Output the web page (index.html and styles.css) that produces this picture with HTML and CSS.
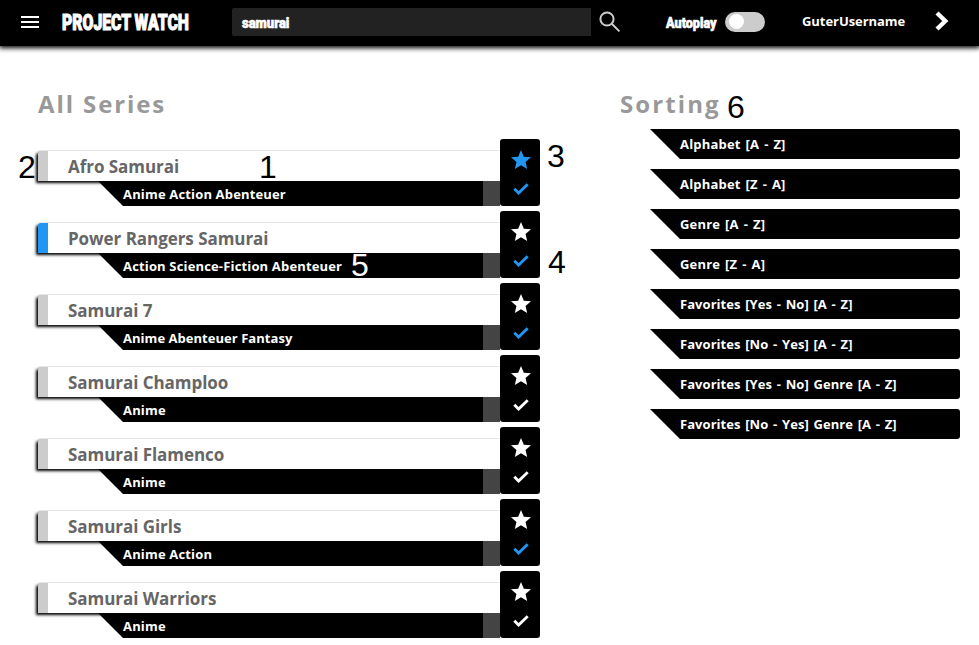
FILE: index.html
```html
<!DOCTYPE html>
<html lang="en">
<head>
<meta charset="utf-8">
<title>Project Watch</title>
<link rel="stylesheet" href="styles.css">
</head>
<body>
<svg class="sprite" aria-hidden="true">
  <symbol id="star" viewBox="0 0 24 24"><path d="M12 17.27 18.18 21l-1.64-7.03L22 9.24l-7.19-.61L12 2 9.19 8.63 2 9.24l5.46 4.73L5.82 21z"/></symbol>
  <symbol id="check" viewBox="0 0 16 12"><path d="M1.3 5.8 5.6 10 14.7 1.3" fill="none" stroke="currentColor" stroke-width="2.9"/></symbol>
</svg>
<header class="topbar">
  <div class="menu"><i></i><i></i><i></i></div>
  <div class="brand"><span>PROJECT WATCH</span></div>
  <div class="search"><span>samurai</span></div>
  <svg class="lens" viewBox="0 0 22 22"><circle cx="8" cy="8" r="6.6"/><path d="m12.8 12.8 7.6 7.6"/></svg>
  <div class="autoplay"><span>Autoplay</span></div>
  <div class="switch"></div>
  <div class="user">GuterUsername</div>
  <svg class="next" viewBox="0 0 14 20"><path d="m2 2 8.3 8L2 18"/></svg>
</header>
<main>
  <section class="series">
    <h1>All Series</h1>
    <article class="item">
      <div class="info"><h2>Afro Samurai</h2><p><span>Anime Action Abenteuer</span></p></div>
      <div class="actions"><svg class="star on"><use href="#star"/></svg><svg class="check on"><use href="#check"/></svg></div>
    </article>
    <article class="item">
      <div class="info active"><h2>Power Rangers Samurai</h2><p><span>Action Science-Fiction Abenteuer</span></p></div>
      <div class="actions"><svg class="star"><use href="#star"/></svg><svg class="check on"><use href="#check"/></svg></div>
    </article>
    <article class="item">
      <div class="info"><h2>Samurai 7</h2><p class="tight"><span>Anime Abenteuer Fantasy</span></p></div>
      <div class="actions"><svg class="star"><use href="#star"/></svg><svg class="check on"><use href="#check"/></svg></div>
    </article>
    <article class="item">
      <div class="info"><h2>Samurai Champloo</h2><p><span>Anime</span></p></div>
      <div class="actions"><svg class="star"><use href="#star"/></svg><svg class="check"><use href="#check"/></svg></div>
    </article>
    <article class="item">
      <div class="info"><h2>Samurai Flamenco</h2><p><span>Anime</span></p></div>
      <div class="actions"><svg class="star"><use href="#star"/></svg><svg class="check"><use href="#check"/></svg></div>
    </article>
    <article class="item">
      <div class="info"><h2>Samurai Girls</h2><p><span>Anime Action</span></p></div>
      <div class="actions"><svg class="star"><use href="#star"/></svg><svg class="check on"><use href="#check"/></svg></div>
    </article>
    <article class="item">
      <div class="info"><h2>Samurai Warriors</h2><p><span>Anime</span></p></div>
      <div class="actions"><svg class="star"><use href="#star"/></svg><svg class="check"><use href="#check"/></svg></div>
    </article>
  </section>
  <section class="sorting">
    <h1>Sorting</h1>
    <ul>
      <li class="short">Alphabet [A - Z]</li>
      <li class="short">Alphabet [Z - A]</li>
      <li class="short">Genre [A - Z]</li>
      <li class="short">Genre [Z - A]</li>
      <li>Favorites [Yes - No] [A - Z]</li>
      <li>Favorites [No - Yes] [A - Z]</li>
      <li>Favorites [Yes - No] Genre [A - Z]</li>
      <li>Favorites [No - Yes] Genre [A - Z]</li>
    </ul>
  </section>
</main>
<b class="note n1">1</b>
<b class="note n2">2</b>
<b class="note n3">3</b>
<b class="note n4">4</b>
<b class="note n5">5</b>
<b class="note n6">6</b>
</body>
</html>
```
FILE: styles.css
```css
* { box-sizing: border-box; margin: 0; padding: 0; }
body {
  width: 979px;
  height: 645px;
  overflow: hidden;
  background: #fff;
  font-family: "Open Sans", "Noto Sans", sans-serif;
  font-weight: 700;
}
.sprite { display: none; }

.topbar {
  display: flex;
  align-items: center;
  height: 46px;
  padding-left: 21px;
  padding-bottom: 2px;
  background: #000;
  color: #fff;
  box-shadow: 0 1px 5px 1px #000;
}
.menu { width: 18px; margin-right: 23px; }
.menu i { display: block; height: 2px; background: #fff; }
.menu i + i { margin-top: 3px; }
.brand, .search span, .autoplay {
  font-family: Roboto, sans-serif;
  font-weight: 900;
  white-space: nowrap;
}
.brand { width: 170px; font-size: 22.5px; line-height: 28px; }
.brand span, .search span, .autoplay span {
  display: inline-block;
  transform-origin: 0 50%;
  -webkit-text-stroke: .6px #fff;
}
.brand span { transform: scaleX(.7); -webkit-text-stroke-width: 1.1px; }
.search {
  width: 359px;
  height: 28px;
  padding-left: 10px;
  border-radius: 2px 0 0 2px;
  background: #222;
  font-size: 14px;
  line-height: 29px;
}
.search span { transform: scaleX(.93); }
.lens { width: 22px; height: 22px; margin-left: 8px; fill: none; stroke: #ccc; stroke-width: 2; }
.autoplay { width: 59px; margin-left: 45px; padding-top: 2px; font-size: 14px; }
.autoplay span { transform: scaleX(.9); }
.switch { width: 40px; height: 20px; padding: 2px 4px; border-radius: 10px; background: #ccc; }
.switch::before { content: ""; display: block; width: 15px; height: 15px; border-radius: 50%; background: #fff; }
.user { width: 133px; margin: -2px 0 0 37px; font-size: 13px; line-height: 20px; letter-spacing: -.06px; }
.next { width: 14px; height: 20px; margin-top: -2px; fill: none; stroke: #fff; stroke-width: 4.4; }

main { display: flex; padding-left: 38px; }
h1 { color: #999; font-size: 24px; line-height: 32px; letter-spacing: 2.1px; white-space: nowrap; }
.series { width: 502px; padding-top: 42px; }
.series h1 { margin-bottom: 19px; letter-spacing: 1.9px; }
.item { display: flex; height: 67px; margin-bottom: 5px; }
.info { width: 462px; padding-top: 12px; }
.info h2 {
  height: 30px;
  padding-left: 20px;
  border-left: 10px solid #ccc;
  border-radius: 3px 0 0 0;
  background: #fff;
  color: #666;
  box-shadow: -2px 2px 3px #000, 0 -1px 0 #eee;
  font-size: 17px;
  line-height: 31px;
  letter-spacing: -.05px;
  white-space: nowrap;
}
.info.active h2 { border-left-color: #2196f3; }
.info p {
  position: relative;
  height: 25px;
  margin-left: 60px;
  padding-left: 25px;
  border-right: 17px solid #444;
  background: #000;
  clip-path: polygon(0 0, 100% 0, 100% 100%, 25px 100%);
  color: #fff;
  font-size: 13px;
  line-height: 27px;
  letter-spacing: .16px;
  white-space: nowrap;
}
.info .tight { letter-spacing: .04px; }
.actions {
  position: relative;
  width: 40px;
  border-radius: 3px;
  background: #000;
  color: #fff;
}
.actions svg { display: block; fill: currentColor; }
.actions .on { color: #2196f3; }
.star { width: 24px; height: 24px; margin: 8.5px 0 0 9px; }
.check { width: 16px; height: 12px; margin: 11.5px 0 0 13px; }

.sorting { width: 340px; margin-left: 80px; padding-top: 42px; }
.sorting ul { margin: 9px 0 0 30px; list-style: none; }
.sorting li {
  height: 30px;
  margin-bottom: 10px;
  padding-left: 30px;
  border-radius: 0 3px 3px 0;
  background: #000;
  clip-path: polygon(0 0, 100% 0, 100% 100%, 30px 100%);
  color: #fff;
  font-size: 13px;
  line-height: 30px;
  letter-spacing: .05px;
  word-spacing: 1.3px;
}
.sorting .short { letter-spacing: .2px; word-spacing: 1.3px; }

.note {
  position: absolute;
  font: 400 32px/36px "Liberation Sans", sans-serif;
}
.n1 { left: 259px; top: 149px; }
.n2 { left: 18px; top: 149px; }
.n3 { left: 547px; top: 138px; }
.n4 { left: 548px; top: 244px; }
.n5 { left: 351px; top: 247px; color: #fff; }
.n6 { left: 727px; top: 89px; }
```
